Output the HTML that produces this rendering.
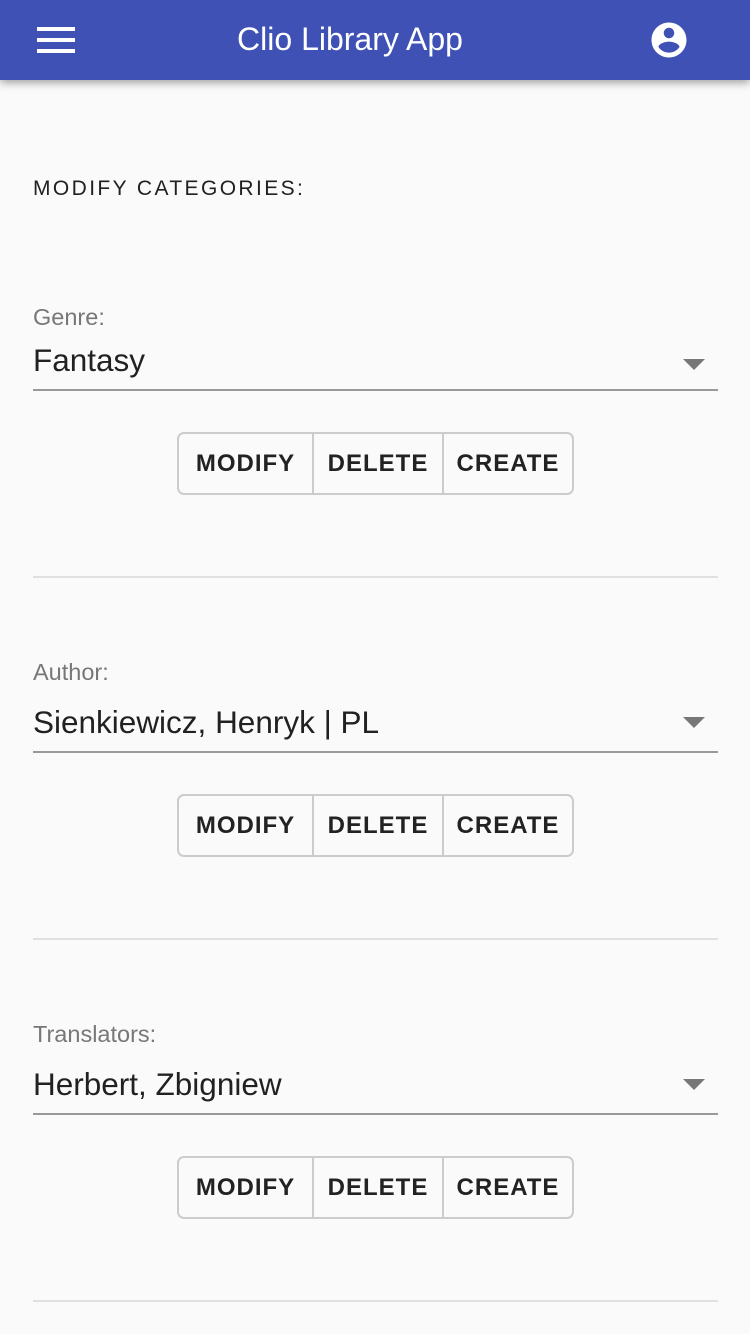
<!DOCTYPE html>
<html><head><meta charset="utf-8"><style>
*{margin:0;padding:0;box-sizing:border-box}
body{width:750px;height:1334px;background:#fafafa;font-family:"Liberation Sans",sans-serif;position:relative;overflow:hidden;color:#212121}
.bar{position:absolute;left:0;top:0;width:750px;height:80px;background:#3f51b5;box-shadow:0 3px 8px rgba(0,0,0,.35);z-index:2}
.title{position:absolute;left:0;right:50px;top:21px;text-align:center;color:#fff;font-size:32px}
.abs{position:absolute}
.h{left:33px;top:177px;font-size:21px;letter-spacing:2.4px;color:#212121}
.lbl{left:33px;font-size:23.5px;color:#777}
.val{left:33px;font-size:31.5px;color:#212121}
.line{left:33px;width:685px;height:2px;background:#999}
.arr{left:683px;width:0;height:0;border-left:11px solid transparent;border-right:11px solid transparent;border-top:11px solid #777}
.grp{left:177px;width:397px;height:63px;border:2px solid #ccc;border-radius:7px;display:flex;background:#fafafa}
.grp div{display:flex;align-items:center;justify-content:center;font-size:24px;font-weight:bold;letter-spacing:1px;color:#222}
.grp div+div{border-left:2px solid #ccc}
.div{left:33px;width:685px;height:2px;background:#e0e0e0}
</style></head><body>
<div class="bar">
<svg class="abs" style="left:37px;top:27px" width="38" height="26"><rect y="0" width="38" height="4" fill="#fff"/><rect y="11" width="38" height="4" fill="#fff"/><rect y="22" width="38" height="4" fill="#fff"/></svg>
<div class="title">Clio Library App</div>
<svg class="abs" style="left:648px;top:19px" width="42" height="42" viewBox="0 0 24 24"><path fill="#fff" d="M12 2C6.48 2 2 6.480 2 12s4.48 10 10 10 10-4.48 10-10S17.52 2 12 2zm0 3c1.66 0 3 1.34 3 3s-1.34 3-3 3-3-1.34-3-3 1.34-3 3-3zm0 14.2c-2.5 0-4.71-1.28-6-3.22.03-1.99 4-3.08 6-3.08 1.99 0 5.97 1.09 6 3.08-1.29 1.94-3.5 3.22-6 3.22z"/></svg>
</div>
<div class="abs h">MODIFY CATEGORIES:</div>

<div class="abs lbl" style="top:304px">Genre:</div>
<div class="abs val" style="top:342px">Fantasy</div>
<div class="abs arr" style="top:359px"></div>
<div class="abs line" style="top:389px"></div>
<div class="abs grp" style="top:432px"><div style="width:133px">MODIFY</div><div style="width:130px">DELETE</div><div style="flex:1">CREATE</div></div>
<div class="abs div" style="top:576px"></div>

<div class="abs lbl" style="top:659px">Author:</div>
<div class="abs val" style="top:704px">Sienkiewicz, Henryk | PL</div>
<div class="abs arr" style="top:717px"></div>
<div class="abs line" style="top:751px"></div>
<div class="abs grp" style="top:794px"><div style="width:133px">MODIFY</div><div style="width:130px">DELETE</div><div style="flex:1">CREATE</div></div>
<div class="abs div" style="top:938px"></div>

<div class="abs lbl" style="top:1021px">Translators:</div>
<div class="abs val" style="top:1066px">Herbert, Zbigniew</div>
<div class="abs arr" style="top:1079px"></div>
<div class="abs line" style="top:1113px"></div>
<div class="abs grp" style="top:1156px"><div style="width:133px">MODIFY</div><div style="width:130px">DELETE</div><div style="flex:1">CREATE</div></div>
<div class="abs div" style="top:1300px"></div>
</body></html>
